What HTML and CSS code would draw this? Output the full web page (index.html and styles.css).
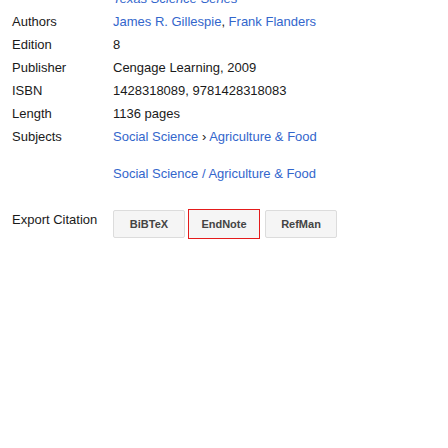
FILE: index.html
```html
<!DOCTYPE html>
<html>
<head>
<meta charset="utf-8">
<link rel="stylesheet" href="styles.css">
</head>
<body>
<div class="about">
  <div class="row series"><div class="label"></div><div class="value"><a class="link italic">Texas Science Series</a></div></div>
  <div class="row"><div class="label">Authors</div><div class="value"><a class="link">James R. Gillespie</a>, <a class="link">Frank Flanders</a></div></div>
  <div class="row"><div class="label">Edition</div><div class="value">8</div></div>
  <div class="row"><div class="label">Publisher</div><div class="value">Cengage Learning, 2009</div></div>
  <div class="row"><div class="label">ISBN</div><div class="value">1428318089, 9781428318083</div></div>
  <div class="row"><div class="label">Length</div><div class="value">1136 pages</div></div>
  <div class="row"><div class="label">Subjects</div>
    <div class="value">
      <div><a class="link">Social Science</a> › <a class="link">Agriculture &amp; Food</a></div>
      <div class="subject2"><a class="link">Social Science / Agriculture &amp; Food</a></div>
    </div>
  </div>
  <div class="row export"><div class="label">Export Citation</div>
    <div class="value buttons">
      <span class="btn">BiBTeX</span>
      <span class="btn active">EndNote</span>
      <span class="btn">RefMan</span>
    </div>
  </div>
</div>
</body>
</html>
```
FILE: styles.css
```css
html, body {
  margin: 0;
  padding: 0;
  background: #fff;
}
body {
  font-family: "Liberation Sans", Arial, sans-serif;
  font-size: 13px;
  color: #1a1a1a;
}
.about {
  padding-left: 12px;
  margin-top: -13px;
}
.row {
  display: grid;
  grid-template-columns: 101px auto;
  line-height: 23px;
}
.link {
  color: #3366cc;
  text-decoration: none;
}
.italic {
  font-style: italic;
}
.subject2 {
  margin-top: 14px;
}
.export {
  margin-top: 23px;
}
.buttons {
  display: flex;
  align-items: flex-start;
  gap: 4px;
  padding-top: 2px;
}
.btn {
  box-sizing: border-box;
  width: 72px;
  height: 28px;
  display: flex;
  align-items: center;
  justify-content: center;
  background: #f5f5f5;
  border: 1px solid #dcdcdc;
  border-radius: 2px;
  font-size: 11px;
  font-weight: bold;
  color: #444;
  line-height: 1;
}
.btn.active {
  height: 30px;
  margin: -1px 1px 0 -1px;
  border-color: #e41b1b;
  border-radius: 0;
}
```
